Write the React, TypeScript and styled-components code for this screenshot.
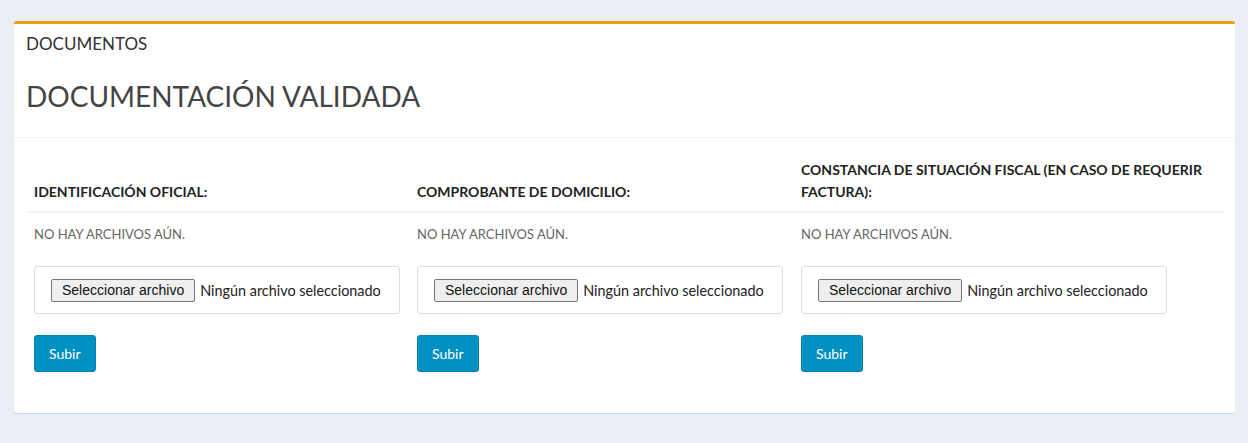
import styled, { createGlobalStyle } from 'styled-components'

const GlobalStyle = createGlobalStyle`
  html, body {
    margin: 0;
    padding: 0;
    background: #eaeff6;
  }
  body {
    font-family: Lato, "Liberation Sans", sans-serif;
    color: #333;
  }
`

const docs = [
  'Identificación oficial:',
  'Comprobante de domicilio:',
  'Constancia de situación fiscal (en caso de requerir factura):',
]

export default function App() {
  return (
    <>
      <GlobalStyle />
      <Page>
        <Card>
          <CardHeader>
            <Eyebrow>DOCUMENTOS</Eyebrow>
            <Title>DOCUMENTACIÓN VALIDADA</Title>
          </CardHeader>
          <CardBody>
            <DocGrid>
              {docs.map((doc) => (
                <HeadCell key={doc}>{doc}</HeadCell>
              ))}
              {docs.map((doc) => (
                <Cell key={doc}>
                  <Empty>No hay archivos aún.</Empty>
                  <FileBox>
                    <FileButton type="button">Seleccionar archivo</FileButton>
                    <FileName>Ningún archivo seleccionado</FileName>
                  </FileBox>
                  <UploadButton type="button">Subir</UploadButton>
                </Cell>
              ))}
            </DocGrid>
          </CardBody>
        </Card>
      </Page>
    </>
  )
}

const Page = styled.div`
  padding: 21px 13px 30px 14px;
`

const Card = styled.div`
  background: #fff;
  border-top: 3px solid #f39c12;
  border-radius: 3px;
  box-shadow: 0 1px 1px rgba(0, 0, 0, 0.12);
`

const CardHeader = styled.div`
  padding: 10px 12px 23px;
  border-bottom: 1px solid #f4f4f4;
`

const Eyebrow = styled.div`
  font-size: 17px;
  line-height: 20px;
  color: #333;
`

const Title = styled.h2`
  margin: 25px 0 0;
  font-size: 28px;
  font-weight: 400;
  line-height: 35px;
  color: #444;
`

const CardBody = styled.div`
  padding: 13px 11px 41px 12px;
`

const DocGrid = styled.div`
  display: grid;
  grid-template-columns: 383px 384px 1fr;
`

const HeadCell = styled.div`
  display: flex;
  align-items: flex-end;
  padding: 8px 8px 8px;
  border-bottom: 2px solid #f4f4f4;
  font-size: 14px;
  font-weight: 700;
  line-height: 22px;
  text-transform: uppercase;
  color: #222;
`

const Cell = styled.div`
  padding: 10px 8px 0;
`

const Empty = styled.div`
  font-size: 13px;
  line-height: 22px;
  text-transform: uppercase;
  color: #666;
`

const FileBox = styled.div`
  box-sizing: border-box;
  display: flex;
  align-items: center;
  gap: 5px;
  width: 366px;
  height: 48px;
  margin-top: 21px;
  padding: 0 16px;
  border: 1px solid #ddd;
  border-radius: 3px;
`

const FileButton = styled.button`
  height: 23px;
  padding: 0 10px;
  border: 1px solid #767676;
  border-radius: 2px;
  background: #efefef;
  font-family: "Liberation Sans", Arial, sans-serif;
  font-size: 14px;
  color: #111;
`

const FileName = styled.span`
  font-size: 14.4px;
  color: #222;
`

const UploadButton = styled.button`
  display: block;
  margin-top: 21px;
  height: 37px;
  padding: 0 14px;
  border: 1px solid #0083b2;
  border-radius: 3px;
  background: #0090c2;
  color: #fff;
  font-family: inherit;
  font-size: 14px;
`
